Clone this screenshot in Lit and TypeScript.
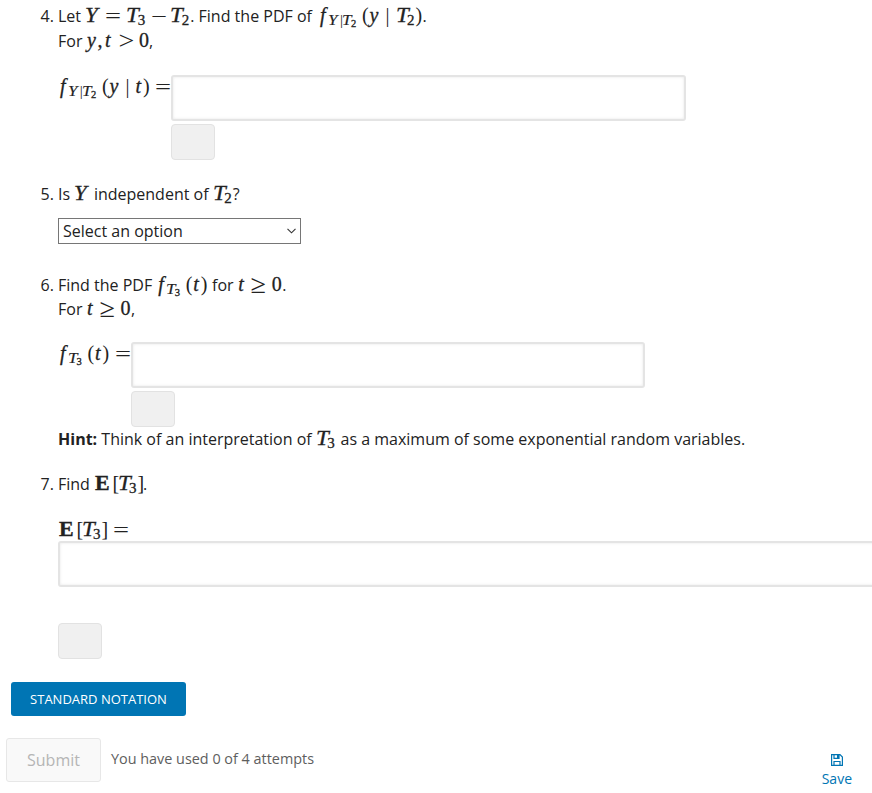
import { LitElement, html, css, svg } from "lit";
import { customElement, property } from "lit/decorators.js";

type Kind = "var" | "cap" | "num" | "rel" | "cmp" | "minus" | "fence" | "bar" | "bold" | "sub" | "subvar" | "subbar" | "subsub" | "gap";
type Token = [Kind, string, number];

const t3: Token[] = [["cap", "T", 11.5], ["sub", "3", 8.5]];
const t2: Token[] = [["cap", "T", 11.5], ["sub", "2", 8.5]];
const fY: Token[] = [
  ["gap", "", 2], ["var", "f", 7.5], ["subvar", "Y", 12.3], ["subbar", "|", 2.5], ["subvar", "T", 8.7], ["subsub", "2", 11],
  ["fence", "(", 7.5], ["var", "y", 16], ["bar", "|", 10],
];
const fT: Token[] = [["gap", "", 2], ["var", "f", 7.5], ["subvar", "T", 9], ["subsub", "3", 11], ["fence", "(", 7.5], ["var", "t", 7.5], ["fence", ")", 7]];
const e3: Token[] = [["gap", "", 0.5], ["bold", "E", 18], ["fence", "[", 5], ...t3, ["fence", "]", 5.5]];
const geZero: Token[] = [["gap", "", 0.5], ["var", "t", 13], ["cmp", "≥", 20.5], ["num", "0", 10.5]];

@customElement("math-run")
class MathRun extends LitElement {
  @property({ attribute: false }) tokens: Token[] = [];
  static styles = css`
    :host { display: inline-flex; align-items: baseline; line-height: 0; white-space: nowrap; font-family: "Liberation Serif", serif; font-size: 20px; -webkit-text-stroke: 0.3px #222; }
    span { display: block; flex: none; }
    b { display: block; width: 11px; font-weight: 400; transform-origin: 0 50%; }
    .var, .cap { font-style: italic; }
    .cap b { transform: scaleX(1.15); }
    .rel, .minus, .cmp, .fence, .bar, .subbar { -webkit-text-stroke: 0; }
    .rel b, .minus b { transform: translateY(1px) scaleX(1.42); }
    .cmp { font-size: 26px; }
    .cmp b { transform: translate(-0.5px, 2px) scaleX(1.08); }
    .bold { font-weight: 700; }
    .bold b { font-weight: 700; transform: scaleX(1.1); }
    .sub { font-size: 15px; transform: translateY(2.5px); }
    .subvar { font-size: 14.5px; font-style: italic; transform: translateY(3px); -webkit-text-stroke-width: 0.15px; }
    .subvar b { transform: scaleX(1.18); }
    .subbar { font-size: 15px; transform: translateY(3px); }
    .subsub { font-size: 10.5px; transform: translateY(5px); }
  `;
  render() {
    return this.tokens.map(([k, t, w]) => html`<span class=${k} style="width:${w}px"><b>${t}</b></span>`);
  }
}

const m = (...tokens: Token[]) => html`<math-run .tokens=${tokens}></math-run>`;

@customElement("app-root")
export class AppRoot extends LitElement {
  static styles = css`
    :host { display: block; height: 793px; overflow: hidden; background: #fff; color: #222; font: 16px/24px "Open Sans", sans-serif; }
    * { box-sizing: border-box; }
    .list { padding: 4px 0 0 40.5px; }
    .q { display: grid; grid-template-columns: 17.5px 1fr; }
    .q5 { margin-top: 22px; }
    .q6 { margin-top: 29px; }
    .q7 { margin-top: 21px; }
    .line { height: 24px; white-space: nowrap; }
    .first { height: 25px; }
    .answer { display: flex; margin-top: 22px; }
    .q6 .answer { margin-top: 21px; }
    .label { flex: none; width: 113px; height: 24px; }
    .short { width: 73px; }
    .field { display: block; width: 515px; height: 46px; padding: 0; margin: 0; border: 2px solid #e4e4e4; border-radius: 3px; background: #fff; box-shadow: inset 0 0 3px rgba(0, 0, 0, 0.1); }
    .field.narrow { width: 514px; }
    .field.wide { width: 860px; margin-top: -1px; }
    .status { width: 44px; height: 36px; margin-top: 3px; border: 1px solid #e2e2e2; border-radius: 4px; background: #f0f0f0; }
    .status.gap { margin-top: 36px; }
    .pick { margin-top: 12px; width: 243px; height: 26px; border: 1px solid #767676; display: flex; align-items: center; justify-content: space-between; padding: 0 4px; }
    .last { margin-top: 22px; }
    button { font-family: inherit; margin: 0; padding: 0; display: block; }
    .notation { margin: 23px 0 0 11px; width: 175px; height: 34px; border: 0; border-radius: 3px; background: #0075b4; color: #fff; font-size: 13px; }
    .bottom { display: flex; margin-top: 22px; padding: 0 20px 0 6px; }
    .submit { width: 95px; height: 44px; border: 1px solid #e7e7e7; border-radius: 3px; background: #f9f9f9; color: #b5b5b5; font-size: 16px; }
    .used { margin-left: 10px; padding-top: 9px; font-size: 14.4px; color: #5e5e5e; white-space: nowrap; }
    .save { margin-left: auto; padding-top: 16px; display: flex; flex-direction: column; align-items: center; color: #0075b4; font-size: 14px; line-height: 20px; }
    .save svg { margin-bottom: 3px; }
  `;
  render() {
    return html`
      <div class="list">
        <div class="q q4"><div>4.</div><div>
          <div class="line first">Let ${m(["cap", "Y", 19.5], ["rel", "=", 21], ["cap", "T", 12], ["sub", "3", 13.5], ["minus", "−", 19], ...t2)}. Find the PDF of ${m(["gap", "", 2], ...fY, ...t2, ["fence", ")", 7])}.</div>
          <div class="line">For ${m(["gap", "", 0.5], ["var", "y", 10.5], ["num", ",", 7.5], ["var", "t", 13.5], ["cmp", ">", 20.5], ["num", "0", 10])},</div>
          <div class="answer">
            <div class="label">${m(...fY, ["var", "t", 7.5], ["fence", ")", 12.5], ["rel", "=", 15])}</div>
            <div><input class="field" aria-label="PDF of Y given T2"><div class="status"></div></div>
          </div>
        </div></div>
        <div class="q q5"><div>5.</div><div>
          <div class="line">Is ${m(["cap", "Y", 15.5])} independent of ${m(...t2)}?</div>
          <div class="pick"><span>Select an option</span><svg width="9" height="6" viewBox="0 0 9 6" fill="none" stroke="#333" stroke-width="1.1"><path d="M.5.8 4.5 4.8 8.5.8" /></svg></div>
        </div></div>
        <div class="q q6"><div>6.</div><div>
          <div class="line">Find the PDF ${m(...fT)} for ${m(...geZero)}.</div>
          <div class="line">For ${m(...geZero)},</div>
          <div class="answer">
            <div class="label short">${m(...fT.slice(0, 6), ["fence", ")", 12], ["rel", "=", 15])}</div>
            <div><input class="field narrow" aria-label="PDF of T3"><div class="status"></div></div>
          </div>
          <div class="line"><strong>Hint:</strong> Think of an interpretation of ${m(...t3, ["gap", "", 0.5])} as a maximum of some exponential random variables.</div>
        </div></div>
        <div class="q q7"><div>7.</div><div>
          <div class="line">Find ${m(...e3)}.</div>
          <div class="line last">${m(...e3.slice(0, 5), ["fence", "]", 11.5], ["rel", "=", 15])}</div>
          <input class="field wide" aria-label="Expectation of T3">
          <div class="status gap"></div>
        </div></div>
      </div>
      <button class="notation">STANDARD NOTATION</button>
      <div class="bottom">
        <button class="submit" disabled>Submit</button>
        <div class="used">You have used 0 of 4 attempts</div>
        <div class="save">
          ${svg`<svg width="12" height="12" viewBox="0 0 12 12" fill="none" stroke="currentColor" stroke-width="1.2"><path d="M.6.6H9L11.4 3V11.4H.6ZM3 11V7.5H9V11M3 1V4.4H8V1" /><path d="M6 1H8V4H6Z" fill="currentColor" stroke="none" /></svg>`}
          <span>Save</span>
        </div>
      </div>
    `;
  }
}
